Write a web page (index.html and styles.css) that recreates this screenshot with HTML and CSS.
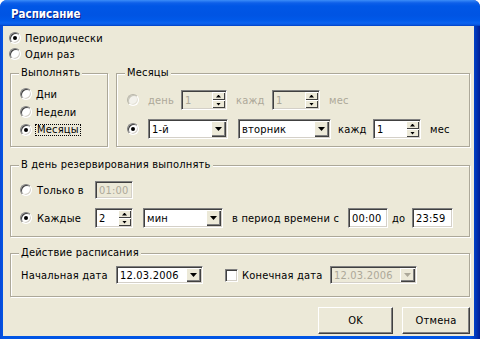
FILE: index.html
```html
<!DOCTYPE html>
<html lang="ru">
<head>
<meta charset="utf-8">
<title>Расписание</title>
<link rel="stylesheet" href="styles.css">
</head>
<body>
<div class="window">
  <div class="titlebar">Расписание</div>
  <div class="client">
    <div class="opt top-opt"><span class="radio on"></span><span>Периодически</span></div>
    <div class="opt top-opt"><span class="radio"></span><span>Один раз</span></div>

    <div class="top-groups">
      <div class="group g-run">
        <div class="legend">Выполнять</div>
        <div class="run-list">
          <div class="opt run-opt"><span class="radio"></span><span>Дни</span></div>
          <div class="opt run-opt"><span class="radio"></span><span>Недели</span></div>
          <div class="opt run-opt"><span class="radio on"></span><span class="focus">Месяцы</span></div>
        </div>
      </div>

      <div class="group g-month">
        <div class="legend">Месяцы</div>
        <div class="row m-row1">
          <span class="radio dis m-radio"></span>
          <span class="lbl dis m-den">день</span>
          <span class="edit spin dis m-spin1"><span class="val">1</span><span class="spinbtn"><span class="half up"></span><span class="half dn"></span></span></span>
          <span class="lbl dis m-kazhd1">кажд</span>
          <span class="edit spin dis m-spin2"><span class="val">1</span><span class="spinbtn"><span class="half up"></span><span class="half dn"></span></span></span>
          <span class="lbl dis m-mes">мес</span>
        </div>
        <div class="row m-row2">
          <span class="radio on m-radio"></span>
          <span class="edit combo m-combo1"><span class="val">1-й</span><span class="dropbtn"></span></span>
          <span class="edit combo m-combo2"><span class="val">вторник</span><span class="dropbtn"></span></span>
          <span class="lbl m-kazhd2">кажд</span>
          <span class="edit spin m-spin3"><span class="val">1</span><span class="spinbtn"><span class="half up"></span><span class="half dn"></span></span></span>
          <span class="lbl m-mes">мес</span>
        </div>
      </div>
    </div>

    <div class="group sec-day">
      <div class="legend">В день резервирования выполнять</div>
      <div class="row d-row1">
        <span class="opt d-opt"><span class="radio"></span><span>Только в</span></span>
        <span class="edit dis d-time0"><span class="val">01:00</span></span>
      </div>
      <div class="row d-row2">
        <span class="opt d-opt"><span class="radio on"></span><span>Каждые</span></span>
        <span class="edit spin d-spin"><span class="val">2</span><span class="spinbtn"><span class="half up"></span><span class="half dn"></span></span></span>
        <span class="edit combo d-combo"><span class="val">мин</span><span class="dropbtn"></span></span>
        <span class="lbl d-period">в период времени с</span>
        <span class="edit d-time1"><span class="val">00:00</span></span>
        <span class="lbl d-do">до</span>
        <span class="edit d-time2"><span class="val">23:59</span></span>
      </div>
    </div>

    <div class="group sec-act">
      <div class="legend">Действие расписания</div>
      <div class="row a-row">
        <span class="lbl a-start">Начальная дата</span>
        <span class="edit combo a-date"><span class="val">12.03.2006</span><span class="dropbtn"></span></span>
        <span class="check a-check"></span>
        <span class="lbl a-end">Конечная дата</span>
        <span class="edit combo dis a-date"><span class="val">12.03.2006</span><span class="dropbtn"></span></span>
      </div>
    </div>

    <div class="buttons">
      <span class="btn btn-ok">OK</span>
      <span class="btn btn-cancel">Отмена</span>
    </div>
  </div>
</div>
</body>
</html>
```

FILE: styles.css
```css
* { box-sizing: border-box; }
html, body { margin: 0; padding: 0; background: #fff; }
body {
  font-family: "DejaVu Sans Condensed", "DejaVu Sans", sans-serif;
  font-size: 11px;
  letter-spacing: 0.2px;
  color: #000;
}

.window {
  width: 480px;
  height: 339px;
  display: flex;
  flex-direction: column;
  background: linear-gradient(to right, #0a48d6, #0055e5 3px, #0055e5 470px, #0036b8 476px, #001e94);
  border-radius: 7px 7px 0 0;
  overflow: hidden;
}

.titlebar {
  height: 26px;
  flex: none;
  padding: 4px 0 0 11px;
  line-height: 21px;
  color: #fff;
  font-weight: bold;
  font-size: 11.5px;
  letter-spacing: 0;
  text-shadow: 1px 1px #0a1b80;
  background: linear-gradient(#3d8ef8 0, #2a7cf3 1px, #0d5fe9 3px, #0057e6 6px, #0054e3 15px, #0059e9 20px, #0b63f0 23px, #0755de 25px, #003cbf 26px);
}

.client {
  flex: 1;
  margin: 0 6px 3px 3px;
  background: #ece9d8;
  padding: 4px 4px 0 7px;
  display: flex;
  flex-direction: column;
}

/* options & radios */
.opt { display: flex; align-items: center; white-space: nowrap; }
.top-opt { height: 16px; margin-left: -1px; }
.radio {
  flex: none;
  width: 12px;
  height: 12px;
  margin-right: 4px;
  border-radius: 50%;
  background: #fff;
  border: 1px solid;
  border-color: #808080 #fff #fff #808080;
  box-shadow: inset 1px 1px #404040, inset -1px -1px #d4d0c8;
  display: flex;
  align-items: center;
  justify-content: center;
}
.radio.on::after {
  content: "";
  width: 4px;
  height: 4px;
  border-radius: 50%;
  background: #000;
}
.radio.dis {
  background: #f3f2ec;
  border-color: #b8b6aa #fff #fff #b8b6aa;
  box-shadow: inset 1px 1px #c8c6ba, inset -1px -1px #e4e2d6;
}

.check {
  flex: none;
  width: 13px;
  height: 13px;
  background: #fff;
  border: 1px solid;
  border-color: #808080 #fff #fff #808080;
  box-shadow: inset 1px 1px #404040, inset -1px -1px #d4d0c8;
}

.lbl { white-space: nowrap; flex: none; }
.dis, .lbl.dis { color: #aca899; }

/* group boxes */
.group {
  border: 1px solid #aca899;
  box-shadow: inset 1px 1px #fff, 1px 1px #fff;
  display: flex;
  flex-direction: column;
  flex: none;
}
.legend {
  align-self: flex-start;
  margin: -8px 0 0 8px;
  padding: 0 2px;
  height: 14px;
  line-height: 14px;
  background: #ece9d8;
  white-space: nowrap;
}

.top-groups { display: flex; margin-top: 11px; height: 74px; flex: none; }
.g-run { width: 98px; }
.g-month { width: 354px; margin-left: 8px; }

.run-list { margin-top: 5px; padding-left: 9px; }
.run-opt { height: 18px; }
.focus {
  margin-left: -1px;
  padding: 0 1px;
  line-height: 10px;
  border: 1px dotted #000;
}

.row { display: flex; align-items: center; height: 20px; flex: none; }

.m-row1 { margin-top: 10px; padding-left: 10px; }
.m-row2 { margin-top: 9px; padding-left: 10px; }
.m-radio { margin-right: 9px; }
.m-den { width: 33px; }
.m-spin1 { width: 46px; height: 19px; }
.m-kazhd1 { width: 36px; margin-left: 9px; }
.m-spin2 { width: 48px; height: 19px; }
.m-mes { margin-left: 9px; }
.m-combo1 { width: 80px; }
.m-combo2 { width: 93px; margin-left: 10px; }
.m-kazhd2 { width: 35px; margin-left: 7px; }
.m-spin3 { width: 48px; }

/* edits */
.edit {
  flex: none;
  display: flex;
  align-items: center;
  height: 20px;
  padding: 1px 1px 1px 3px;
  background: #fff;
  border: 1px solid;
  border-color: #808080 #fff #fff #808080;
  box-shadow: inset 1px 1px #404040, inset -1px -1px #d4d0c8;
  white-space: nowrap;
  overflow: hidden;
}
.edit.dis { background: #ece9d8; }
.val { flex: 1; }

.spinbtn {
  flex: none;
  width: 13px;
  align-self: stretch;
  display: flex;
  flex-direction: column;
}
.half {
  flex: 1;
  background: #ece9d8;
  box-shadow: inset 1px 1px #fff, inset -1px -1px #404040;
  display: flex;
  align-items: center;
  justify-content: center;
}
.half::after {
  content: "";
  width: 5px;
  height: 3px;
  background: #000;
}
.half.up::after { clip-path: polygon(50% 0, 100% 100%, 0 100%); }
.half.dn::after { clip-path: polygon(0 0, 100% 0, 50% 100%); }

.dropbtn {
  flex: none;
  width: 15px;
  align-self: stretch;
  background: #ece9d8;
  box-shadow: inset 1px 1px #fff, inset -1px -1px #404040, inset -2px -2px #808080;
  display: flex;
  align-items: center;
  justify-content: center;
}
.dropbtn::after {
  content: "";
  width: 7px;
  height: 4px;
  background: #000;
  clip-path: polygon(0 0, 100% 0, 50% 100%);
}
.edit.dis .dropbtn::after { background: #aca899; }

/* section: day */
.sec-day { margin-top: 18px; height: 72px; }
.d-row1 { margin-top: 8px; padding-left: 9px; }
.d-row2 { margin-top: 8px; padding-left: 9px; }
.d-opt { width: 75px; flex: none; }
.d-opt .radio { margin-right: 5px; }
.d-time0 { width: 38px; height: 18px; }
.d-spin { width: 38px; }
.d-combo { width: 80px; margin-left: 10px; }
.d-period { width: 116px; margin-left: 9px; }
.d-time1 { width: 40px; }
.d-do { width: 20px; margin-left: 4px; }
.d-time2 { width: 41px; }

/* section: action */
.sec-act { margin-top: 16px; height: 44px; }
.a-row { margin-top: 5px; padding-left: 10px; }
.a-start { width: 95px; }
.a-date { width: 87px; height: 18px; }
.a-check { margin-left: 22px; }
.a-end { width: 88px; margin-left: 4px; }

/* buttons */
.buttons {
  display: flex;
  justify-content: flex-end;
  gap: 9px;
  margin-top: 10px;
  flex: none;
}
.btn {
  height: 27px;
  display: flex;
  align-items: center;
  justify-content: center;
  background: #ece9d8;
  border: 1px solid;
  border-color: #fff #404040 #404040 #fff;
  box-shadow: inset -1px -1px #808080;
}
.btn-ok { width: 75px; }
.btn-cancel { width: 68px; }
```
